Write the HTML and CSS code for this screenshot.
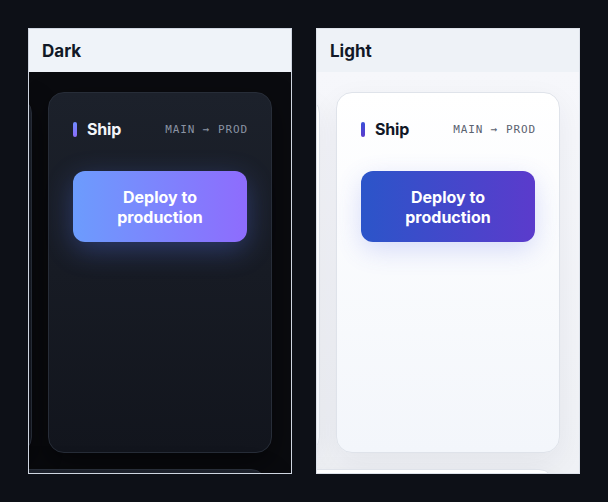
FILE: index.html
```html
<!DOCTYPE html>
<html>
<head>
<meta charset="utf-8">
<title>Deploy button themes</title>
<link rel="stylesheet" href="styles.css">
</head>
<body>
<div class="panels">
  <section class="panel dark">
    <header class="panel-head">Dark</header>
    <div class="viewport">
      <div class="grid">
        <div class="card ghost side"></div>
        <div class="card">
          <div class="card-head">
            <span class="title"><i class="bar"></i>Ship</span>
            <span class="route">MAIN → PROD</span>
          </div>
          <button class="deploy">Deploy to production</button>
        </div>
        <div class="card ghost below"></div>
      </div>
    </div>
  </section>
  <section class="panel light">
    <header class="panel-head">Light</header>
    <div class="viewport">
      <div class="grid">
        <div class="card ghost side"></div>
        <div class="card">
          <div class="card-head">
            <span class="title"><i class="bar"></i>Ship</span>
            <span class="route">MAIN → PROD</span>
          </div>
          <button class="deploy">Deploy to production</button>
        </div>
        <div class="card ghost below"></div>
      </div>
    </div>
  </section>
</div>
</body>
</html>
```

FILE: styles.css
```css
body {
  margin: 0;
  background: #0d1017;
  font-family: 'Inter', 'Noto Sans', sans-serif;
}

.panels {
  display: flex;
  gap: 24px;
  padding: 28px;
}

.panel {
  width: 262px;
  height: 444px;
  display: flex;
  flex-direction: column;
  border: 1px solid #cfd6e1;
  overflow: hidden;
}

.panel-head {
  height: 43px;
  flex: none;
  display: flex;
  align-items: center;
  padding: 0 13px;
  background: #eff3f9;
  color: #111827;
  font-size: 17px;
  font-weight: 700;
}

.viewport {
  flex: 1;
  overflow: hidden;
  padding: 20px 0 0;
}

.grid {
  display: grid;
  grid-template-columns: 224px 224px;
  grid-auto-rows: 361px;
  gap: 16px;
  margin-left: -221px;
}

.card {
  box-sizing: border-box;
  border-radius: 16px;
  padding: 24px 24px;
}

.side { margin-top: 5px; }

.below {
  grid-column: 1 / 3;
  margin-right: 5px;
}

.card-head {
  display: flex;
  align-items: center;
  justify-content: space-between;
  height: 24px;
  margin-bottom: 30px;
}

.title {
  display: flex;
  align-items: center;
  gap: 10px;
  font-size: 16px;
  font-weight: 700;
  letter-spacing: -0.2px;
}

.bar {
  width: 4px;
  height: 15px;
  border-radius: 2px;
}

.route {
  font-family: 'DejaVu Sans Mono', monospace;
  font-size: 11px;
  letter-spacing: 0.9px;
  margin-right: -1px;
}

.deploy {
  display: block;
  width: 100%;
  height: 71px;
  border: 0;
  border-radius: 12px;
  padding: 0 18px;
  font-family: inherit;
  font-size: 16px;
  font-weight: 700;
  line-height: 20px;
  color: #fff;
}

/* dark */
.dark .viewport { background: #0a0b0f; }
.dark .card {
  border: 1px solid #272d38;
  background: linear-gradient(#1c212b, #12151d);
  box-shadow: 0 10px 30px rgba(0, 0, 0, 0.45);
}
.dark .title { color: #f3f5f9; }
.dark .bar { background: linear-gradient(#6f8bff, #8b6cf8); }
.dark .route { color: #8a93a3; }
.dark .deploy {
  background: linear-gradient(90deg, #6c9cfd, #8e6cfd);
  box-shadow: 0 8px 28px rgba(90, 125, 255, 0.32);
}

/* light */
.light { border-color: #dde2ea; }
.light .panel-head { background: #eef2f7; }
.light .viewport { background: linear-gradient(#f6f7fb, #eff1f5); }
.light .card {
  border: 1px solid #dfe3ea;
  background: linear-gradient(#ffffff, #f3f6fb);
  box-shadow: 0 10px 30px rgba(30, 40, 70, 0.06);
}
.light .title { color: #111827; }
.light .bar { background: linear-gradient(#3a4fd8, #5b3bcc); }
.light .route { color: #5b6270; }
.light .deploy {
  background: linear-gradient(90deg, #2b55c9, #5b3bcc);
  box-shadow: 0 8px 26px rgba(70, 90, 230, 0.2);
}
```
